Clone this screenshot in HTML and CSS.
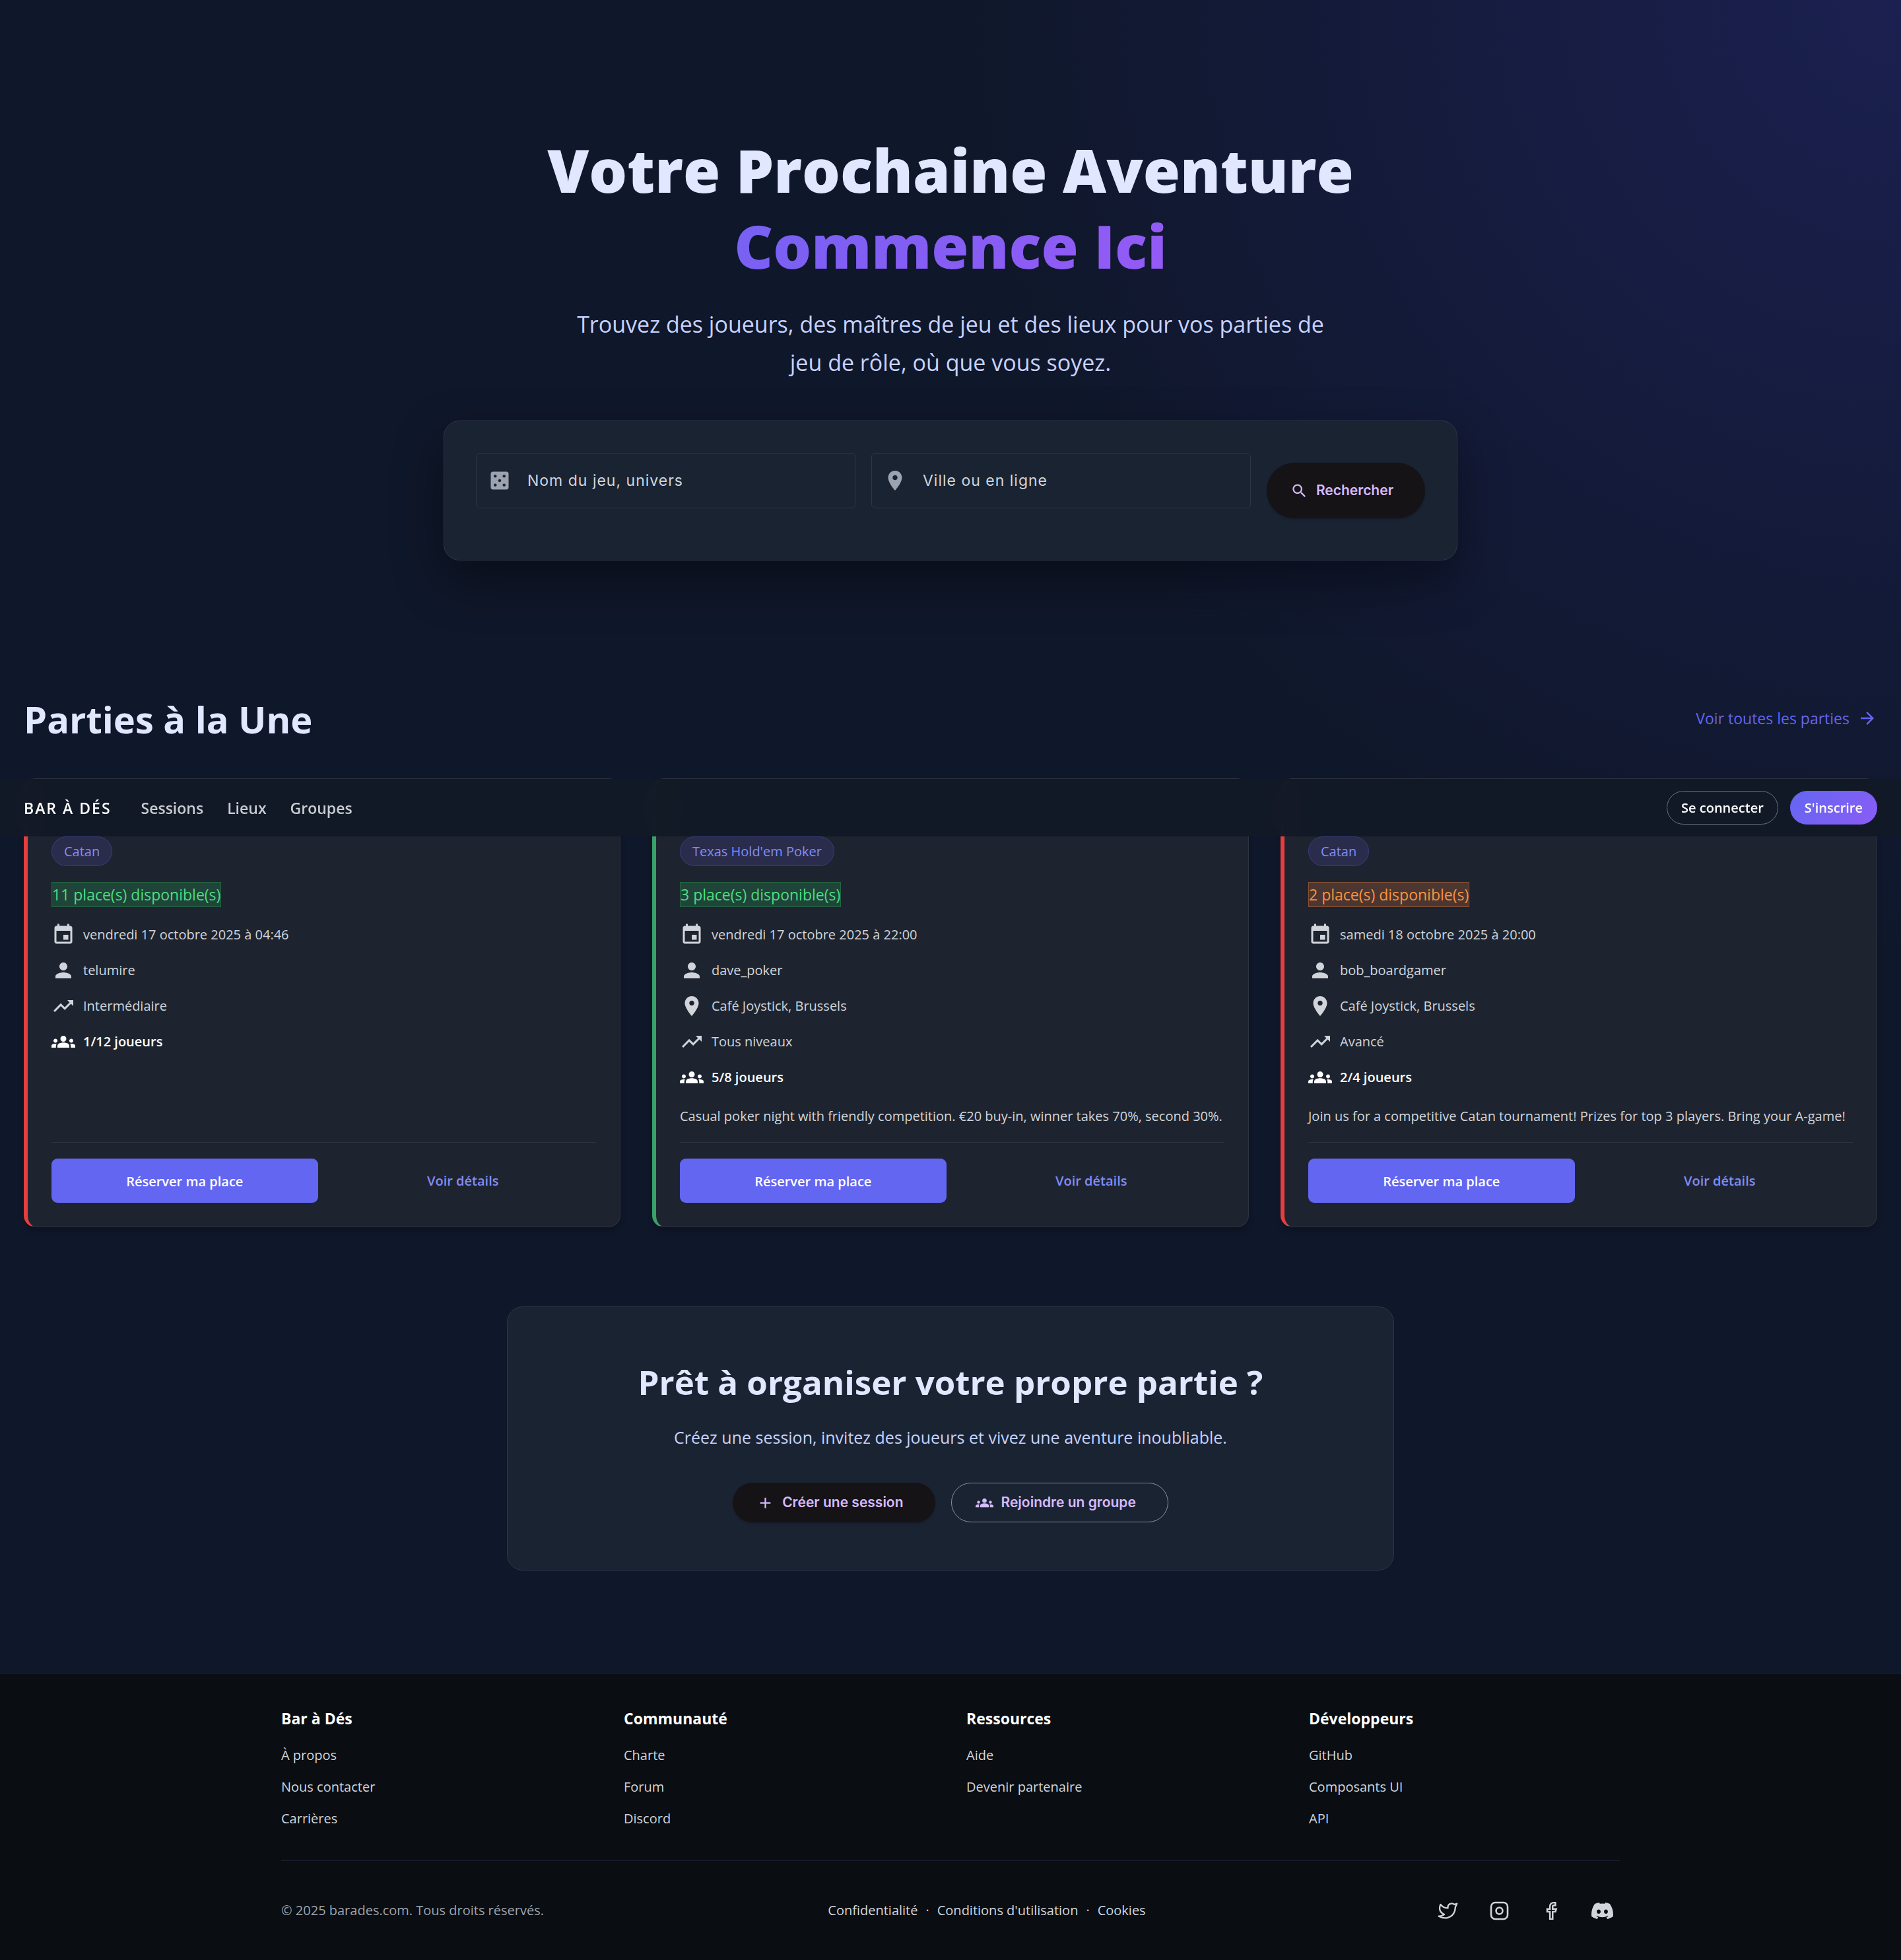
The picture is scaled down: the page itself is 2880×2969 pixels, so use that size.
FILE: index.html
```html
<!DOCTYPE html>
<html lang="fr">
<head>
<meta charset="utf-8">
<meta name="viewport" content="width=device-width, initial-scale=1">
<title>Bar à Dés</title>
<link rel="stylesheet" href="styles.css">
</head>
<body>
<svg class="sprite" aria-hidden="true">
  <symbol id="i-dice" viewBox="0 0 24 24"><path d="M19 3H5c-1.1 0-2 .9-2 2v14c0 1.1.9 2 2 2h14c1.1 0 2-.9 2-2V5c0-1.1-.9-2-2-2zM7.500 18c-.83 0-1.500-.67-1.500-1.500S6.670 15 7.500 15s1.500.67 1.500 1.500S8.330 18 7.500 18zm0-9C6.670 9 6 8.330 6 7.500S6.670 6 7.500 6 9 6.670 9 7.500 8.330 9 7.500 9zm4.500 4.500c-.83 0-1.500-.67-1.500-1.500s.67-1.500 1.500-1.500 1.500.67 1.500 1.500-.67 1.500-1.500 1.500zm4.500 4.500c-.83 0-1.500-.67-1.500-1.500s.67-1.500 1.500-1.500 1.500.67 1.500 1.500-.67 1.500-1.500 1.500zm0-9c-.83 0-1.500-.67-1.500-1.500S15.670 6 16.500 6s1.500.67 1.500 1.500S17.330 9 16.500 9z"/></symbol>
  <symbol id="i-pin" viewBox="0 0 24 24"><path d="M12 2C8.130 2 5 5.130 5 9c0 5.250 7 13 7 13s7-7.750 7-13c0-3.870-3.130-7-7-7zm0 9.500c-1.380 0-2.500-1.120-2.500-2.500s1.120-2.500 2.500-2.500 2.500 1.120 2.500 2.500-1.120 2.500-2.500 2.500z"/></symbol>
  <symbol id="i-search" viewBox="0 0 24 24"><path d="M15.500 14h-.79l-.28-.27C15.410 12.590 16 11.110 16 9.500 16 5.910 13.090 3 9.500 3S3 5.910 3 9.500 5.910 16 9.500 16c1.610 0 3.090-.59 4.230-1.570l.27.28v.79l5 4.990L20.490 19l-4.990-5zm-6 0C7.010 14 5 11.990 5 9.500S7.010 5 9.500 5 14 7.010 14 9.500 11.990 14 9.500 14z"/></symbol>
  <symbol id="i-arrow" viewBox="0 0 24 24"><path d="M12 4l-1.410 1.410L16.170 11H4v2h12.170l-5.580 5.590L12 20l8-8z"/></symbol>
  <symbol id="i-event" viewBox="0 0 24 24"><path d="M17 12h-5v5h5v-5zM16 1v2H8V1H6v2H5c-1.110 0-1.990.9-1.990 2L3 19c0 1.100.89 2 2 2h14c1.100 0 2-.9 2-2V5c0-1.100-.9-2-2-2h-1V1h-2zm3 18H5V8h14v11z"/></symbol>
  <symbol id="i-person" viewBox="0 0 24 24"><path d="M12 12c2.210 0 4-1.790 4-4s-1.790-4-4-4-4 1.790-4 4 1.790 4 4 4zm0 2c-2.670 0-8 1.340-8 4v2h16v-2c0-2.660-5.330-4-8-4z"/></symbol>
  <symbol id="i-trend" viewBox="0 0 24 24"><path d="M16 6l2.290 2.290-4.880 4.880-4-4L2 16.590 3.410 18l6-6 4 4 6.300-6.290L22 12V6z"/></symbol>
  <symbol id="i-groups" viewBox="0 0 24 24"><path d="M12 12.750c1.630 0 3.070.39 4.240.9 1.080.48 1.760 1.560 1.760 2.730V18H6v-1.610c0-1.180.68-2.260 1.760-2.730 1.170-.52 2.610-.91 4.240-.91zM4 13c1.100 0 2-.9 2-2s-.9-2-2-2-2 .9-2 2 .9 2 2 2zm1.130 1.100c-.37-.06-.74-.1-1.130-.1-.99 0-1.930.21-2.780.58C.48 14.900 0 15.620 0 16.430V18h4.500v-1.610c0-.83.23-1.610.63-2.290zM20 13c1.100 0 2-.9 2-2s-.9-2-2-2-2 .9-2 2 .9 2 2 2zm4 3.430c0-.81-.48-1.530-1.220-1.850-.85-.37-1.790-.58-2.780-.58-.39 0-.76.04-1.130.1.400.68.63 1.460.63 2.290V18H24v-1.570zM12 6c1.660 0 3 1.340 3 3s-1.340 3-3 3-3-1.340-3-3 1.340-3 3-3z"/></symbol>
  <symbol id="i-add" viewBox="0 0 24 24"><path d="M19 13h-6v6h-2v-6H5v-2h6V5h2v6h6v2z"/></symbol>
  <symbol id="i-twitter" viewBox="0 0 24 24"><path fill="none" stroke="currentColor" stroke-width="1.7" stroke-linejoin="round" stroke-linecap="round" d="M22 4.010c-1 .49-1.980.69-3 .99-1.120-1.260-2.780-1.330-4.380-.74S11.970 6.320 12 8v1c-3.240.08-6.130-1.400-8-4 0 0-4.180 7.430 4 11-1.870 1.250-3.740 2.090-6 2 3.310 1.800 6.910 2.420 10.030 1.520 3.580-1.040 6.520-3.720 7.650-7.690a13.800 13.800 0 0 0 .5-3.750C20.180 7.770 21.690 5.250 22 4.010z"/></symbol>
  <symbol id="i-instagram" viewBox="0 0 24 24"><g fill="none" stroke="currentColor" stroke-width="1.9"><rect x="2.900" y="2.900" width="18.200" height="18.200" rx="4.500"/><circle cx="12" cy="12" r="3.600"/></g></symbol>
  <symbol id="i-facebook" viewBox="0 0 24 24"><path fill="none" stroke="currentColor" stroke-width="1.800" stroke-linejoin="miter" d="M17 3h-2a4 4 0 0 0-4 4v3H8v3h3v8h3v-8h3l1-3h-4V7a1 1 0 0 1 1-1h2z"/></symbol>
  <symbol id="i-discord" viewBox="0 0 24 24"><path d="M20.320 4.370A19.800 19.800 0 0 0 15.430 2.850a.07.07 0 0 0-.08.04c-.21.37-.44.86-.61 1.250a18.300 18.300 0 0 0-5.490 0A12.600 12.600 0 0 0 8.640 2.890a.08.08 0 0 0-.08-.04 19.700 19.700 0 0 0-4.890 1.520.07.07 0 0 0-.03.03C.53 9.050-.32 13.580.1 18.060a.08.08 0 0 0 .03.06 19.900 19.900 0 0 0 5.990 3.030.08.08 0 0 0 .08-.03c.46-.63.87-1.300 1.230-1.990a.08.08 0 0 0-.04-.11 13.100 13.100 0 0 1-1.870-.89.08.08 0 0 1-.01-.13l.37-.29a.07.07 0 0 1 .08-.01c3.930 1.790 8.180 1.790 12.060 0a.07.07 0 0 1 .08.01l.37.29a.08.08 0 0 1-.01.13 12.300 12.300 0 0 1-1.870.89.08.08 0 0 0-.04.11c.36.7.77 1.360 1.220 1.990a.08.08 0 0 0 .08.03 19.800 19.800 0 0 0 6-3.030.08.08 0 0 0 .03-.05c.5-5.180-.84-9.680-3.550-13.660a.06.06 0 0 0-.03-.03zM8.020 15.330c-1.180 0-2.160-1.080-2.160-2.420s.96-2.420 2.160-2.420c1.210 0 2.180 1.100 2.160 2.420 0 1.340-.96 2.420-2.160 2.420zm7.970 0c-1.180 0-2.160-1.080-2.160-2.420s.96-2.420 2.160-2.420c1.210 0 2.180 1.100 2.160 2.420 0 1.340-.95 2.420-2.160 2.420z"/></symbol>
</svg>

<main class="page">
  <section class="hero">
    <h1 class="hero-title">Votre Prochaine Aventure <span class="hero-accent">Commence Ici</span></h1>
    <p class="hero-text">Trouvez des joueurs, des maîtres de jeu et des lieux pour vos parties de jeu de rôle, où que vous soyez.</p>
    <form class="search">
      <label class="field"><svg class="icon"><use href="#i-dice"/></svg><input type="text" placeholder="Nom du jeu, univers" aria-label="Nom du jeu, univers"></label>
      <label class="field"><svg class="icon"><use href="#i-pin"/></svg><input type="text" placeholder="Ville ou en ligne" aria-label="Ville ou en ligne"></label>
      <button class="btn btn-tall" type="submit"><svg class="icon"><use href="#i-search"/></svg>Rechercher</button>
    </form>
  </section>

  <section class="featured">
    <header class="featured-head">
      <h2 class="section-title">Parties à la Une</h2>
      <a class="more" href="#">Voir toutes les parties<svg class="icon"><use href="#i-arrow"/></svg></a>
    </header>

    <div class="featured-body">
      <nav class="nav">
        <a class="brand" href="#">BAR À DÉS</a>
        <a class="nav-link" href="#">Sessions</a>
        <a class="nav-link" href="#">Lieux</a>
        <a class="nav-link" href="#">Groupes</a>
        <div class="nav-actions">
          <a class="nav-btn" href="#">Se connecter</a>
          <a class="nav-btn nav-btn-primary" href="#">S'inscrire</a>
        </div>
      </nav>

      <div class="cards">
        <article class="card card-red">
          <span class="tag">Catan</span>
          <span class="seats">11 place(s) disponible(s)</span>
          <ul class="facts">
            <li><svg class="icon"><use href="#i-event"/></svg>vendredi 17 octobre 2025 à 04:46</li>
            <li><svg class="icon"><use href="#i-person"/></svg>telumire</li>
            <li><svg class="icon"><use href="#i-trend"/></svg>Intermédiaire</li>
            <li class="players"><svg class="icon"><use href="#i-groups"/></svg>1/12 joueurs</li>
          </ul>
          <div class="card-actions">
            <button class="reserve" type="button">Réserver ma place</button>
            <a class="details" href="#">Voir détails</a>
          </div>
        </article>

        <article class="card card-green">
          <span class="tag">Texas Hold'em Poker</span>
          <span class="seats">3 place(s) disponible(s)</span>
          <ul class="facts">
            <li><svg class="icon"><use href="#i-event"/></svg>vendredi 17 octobre 2025 à 22:00</li>
            <li><svg class="icon"><use href="#i-person"/></svg>dave_poker</li>
            <li><svg class="icon"><use href="#i-pin"/></svg>Café Joystick, Brussels</li>
            <li><svg class="icon"><use href="#i-trend"/></svg>Tous niveaux</li>
            <li class="players"><svg class="icon"><use href="#i-groups"/></svg>5/8 joueurs</li>
          </ul>
          <p class="description">Casual poker night with friendly competition. €20 buy-in, winner takes 70%, second 30%.</p>
          <div class="card-actions">
            <button class="reserve" type="button">Réserver ma place</button>
            <a class="details" href="#">Voir détails</a>
          </div>
        </article>

        <article class="card card-red">
          <span class="tag">Catan</span>
          <span class="seats seats-few">2 place(s) disponible(s)</span>
          <ul class="facts">
            <li><svg class="icon"><use href="#i-event"/></svg>samedi 18 octobre 2025 à 20:00</li>
            <li><svg class="icon"><use href="#i-person"/></svg>bob_boardgamer</li>
            <li><svg class="icon"><use href="#i-pin"/></svg>Café Joystick, Brussels</li>
            <li><svg class="icon"><use href="#i-trend"/></svg>Avancé</li>
            <li class="players"><svg class="icon"><use href="#i-groups"/></svg>2/4 joueurs</li>
          </ul>
          <p class="description">Join us for a competitive Catan tournament! Prizes for top 3 players. Bring your A-game!</p>
          <div class="card-actions">
            <button class="reserve" type="button">Réserver ma place</button>
            <a class="details" href="#">Voir détails</a>
          </div>
        </article>
      </div>
    </div>
  </section>

  <section class="cta">
    <h2 class="cta-title">Prêt à organiser votre propre partie ?</h2>
    <p class="cta-text">Créez une session, invitez des joueurs et vivez une aventure inoubliable.</p>
    <div class="cta-actions">
      <button class="btn" type="button"><svg class="icon"><use href="#i-add"/></svg>Créer une session</button>
      <button class="btn btn-outline" type="button"><svg class="icon"><use href="#i-groups"/></svg>Rejoindre un groupe</button>
    </div>
  </section>
</main>

<footer class="footer">
  <div class="footer-inner">
    <div class="footer-cols">
      <div class="footer-col"><h3>Bar à Dés</h3><a href="#">À propos</a><a href="#">Nous contacter</a><a href="#">Carrières</a></div>
      <div class="footer-col"><h3>Communauté</h3><a href="#">Charte</a><a href="#">Forum</a><a href="#">Discord</a></div>
      <div class="footer-col"><h3>Ressources</h3><a href="#">Aide</a><a href="#">Devenir partenaire</a></div>
      <div class="footer-col"><h3>Développeurs</h3><a href="#">GitHub</a><a href="#">Composants UI</a><a href="#">API</a></div>
    </div>
    <div class="footer-bottom">
      <span class="copyright">© 2025 barades.com. Tous droits réservés.</span>
      <div class="legal"><a href="#">Confidentialité</a><span>·</span><a href="#">Conditions d'utilisation</a><span>·</span><a href="#">Cookies</a></div>
      <div class="social">
        <a href="#" aria-label="Twitter"><svg class="icon"><use href="#i-twitter"/></svg></a>
        <a href="#" aria-label="Instagram"><svg class="icon"><use href="#i-instagram"/></svg></a>
        <a href="#" aria-label="Facebook"><svg class="icon"><use href="#i-facebook"/></svg></a>
        <a href="#" aria-label="Discord"><svg class="icon"><use href="#i-discord"/></svg></a>
      </div>
    </div>
  </div>
</footer>
</body>
</html>
```
FILE: styles.css
```css
* { box-sizing: border-box; }

body {
  margin: 0;
  background: #0f172a;
  color: #d1d5db;
  font-family: "Open Sans", "Noto Sans", sans-serif;
  font-size: 20px;
  line-height: 34px;
}

h1, h2, h3, p, ul { margin: 0; padding: 0; }
ul { list-style: none; }
a { color: inherit; text-decoration: none; }
button, input { font: inherit; }

.sprite { display: none; }

.icon {
  display: block;
  flex: none;
  width: 36px;
  height: 36px;
  fill: currentColor;
}

.page {
  padding-bottom: 156px;
  background: radial-gradient(circle 1440px at 100% 0, #1b2050, rgba(27, 32, 80, 0));
}

/* Hero */
.hero {
  display: flex;
  flex-direction: column;
  align-items: center;
  max-width: 1536px;
  margin: 0 auto;
  padding: 200px 0 192px;
  text-align: center;
}

.hero-title {
  width: 100%;
  color: #e0e7ff;
  font-size: 91px;
  font-weight: 800;
  line-height: 115px;
}

.hero-accent {
  display: block;
  background: linear-gradient(135deg, #6366f1, #a855f7);
  background-clip: text;
  -webkit-background-clip: text;
  color: transparent;
}

.hero-text {
  max-width: 1152px;
  margin-top: 32px;
  color: #c7d2fe;
  font-size: 34px;
  line-height: 58px;
}

.search {
  display: flex;
  align-items: center;
  gap: 24px;
  width: 100%;
  margin-top: 59px;
  padding: 48px;
  border: 1px solid #2d3748;
  border-radius: 24px;
  background: #1a2332;
  box-shadow: 0 30px 75px rgba(0, 0, 0, 0.4);
  font-family: Inter, sans-serif;
}

.field {
  display: flex;
  flex: 1;
  align-items: center;
  gap: 24px;
  height: 84px;
  margin-bottom: 30px;
  padding: 0 17px;
  border: 1px solid #2d3646;
  border-radius: 6px;
  color: #9ca3af;
}

.field input {
  flex: 1;
  min-width: 0;
  padding: 0;
  border: 0;
  outline: 0;
  background: none;
  color: #d1d5db;
  font-size: 23px;
  letter-spacing: 1px;
}

.field input::placeholder { color: #d1d5db; opacity: 1; }

.btn {
  display: flex;
  align-items: center;
  gap: 12px;
  height: 60px;
  padding: 0 48px 0 36px;
  border: 0;
  border-radius: 42px;
  background: #151316;
  box-shadow: 0 2px 3px rgba(0, 0, 0, 0.2);
  color: #d5baff;
  font-family: Inter, sans-serif;
  font-size: 21px;
  font-weight: 600;
}

.btn .icon { width: 27px; height: 27px; }
.btn-tall { height: 84px; }

.btn-outline {
  border: 1px solid #948f99;
  background: none;
  box-shadow: none;
}

/* Featured sessions */
.featured-head {
  display: flex;
  align-items: center;
  justify-content: space-between;
  padding: 0 36px 42px;
}

.section-title {
  color: #e0e7ff;
  font-size: 56px;
  line-height: 96px;
}

.more {
  display: flex;
  align-items: center;
  gap: 12px;
  padding-bottom: 3px;
  color: #6366f1;
  font-size: 23px;
  font-weight: 500;
}

.more .icon { width: 30px; height: 30px; }

.featured-body { position: relative; }

.nav {
  position: absolute;
  inset: 1px 0 auto;
  display: flex;
  align-items: center;
  gap: 36px;
  height: 87px;
  padding: 0 36px;
  background: rgba(18, 25, 38, 0.95);
  backdrop-filter: blur(18px);
  color: #c9ccd2;
  font-size: 23px;
  font-weight: 600;
}

.brand {
  margin-right: 9px;
  color: #fff;
  letter-spacing: 2px;
}

.nav-actions {
  display: flex;
  gap: 18px;
  margin-left: auto;
}

.nav-btn {
  height: 51px;
  padding: 0 21px;
  border: 1px solid #6b7280;
  border-radius: 26px;
  color: #fff;
  font-size: 20px;
  line-height: 49px;
}

.nav-btn-primary {
  border-color: transparent;
  background: linear-gradient(135deg, #6366f1, #8b5cf6) border-box;
}

.cards {
  display: grid;
  grid-template-columns: repeat(3, 1fr);
  gap: 48px;
  padding: 0 36px;
}

.card {
  display: flex;
  flex-direction: column;
  align-items: flex-start;
  padding: 87px 36px 36px;
  border: 1px solid #2d3440;
  border-left-width: 6px;
  border-radius: 18px;
  background: #1e242f;
  box-shadow: 0 6px 9px rgba(0, 0, 0, 0.2);
}

.card-red { border-left-color: #e53e3e; }
.card-green { border-left-color: #38a169; }

.tag {
  padding: 0 18px;
  border: 1px solid #3a3c7c;
  border-radius: 23px;
  background: #2a2c4c;
  color: #818cf8;
  font-size: 20px;
  font-weight: 500;
  line-height: 43px;
}

.seats {
  margin-top: 24px;
  border: 1px solid #21673f;
  background: #20443a;
  color: #4ade80;
  font-size: 23px;
  line-height: 36px;
}

.seats-few {
  border-color: #8a5334;
  background: #4b3631;
  color: #fb923c;
}

.facts {
  display: flex;
  flex-direction: column;
  gap: 18px;
  margin-top: 24px;
}

.facts li {
  display: flex;
  align-items: center;
  gap: 12px;
  height: 36px;
}

.facts .players {
  color: #fff;
  font-weight: 600;
}

.description { margin-top: 24px; }

.card-actions {
  display: grid;
  grid-template-columns: 1fr 1fr;
  gap: 18px;
  align-self: stretch;
  margin-top: auto;
  padding-top: 24px;
  border-top: 1px solid #2d3440;
}

.description + .card-actions { margin-top: 22px; }

.reserve, .details {
  height: 67px;
  border: 0;
  border-radius: 9px;
  font-size: 20px;
  font-weight: 600;
  line-height: 67px;
  text-align: center;
}

.reserve { background: #6366f1; color: #fff; }
.details { color: #818cf8; }

/* Call to action */
.cta {
  max-width: 1344px;
  margin: 120px auto 0;
  padding: 70px 72px 72px;
  border: 1px solid #2d3748;
  border-radius: 24px;
  background: #1a2332;
  text-align: center;
}

.cta-title {
  color: #e0e7ff;
  font-size: 51px;
  line-height: 86px;
}

.cta-text {
  margin-top: 20px;
  color: #c7d2fe;
  font-size: 25px;
  line-height: 43px;
}

.cta-actions {
  display: flex;
  justify-content: center;
  gap: 24px;
  margin-top: 47px;
}

/* Footer */
.footer {
  border-top: 1px solid #171b2e;
  background: #0a0d12;
}

.footer-inner {
  max-width: 2100px;
  margin: 0 auto;
  padding: 48px 36px;
}

.footer-cols {
  display: grid;
  grid-template-columns: repeat(4, 1fr);
  gap: 48px;
  padding-bottom: 46px;
}

.footer-col {
  display: flex;
  flex-direction: column;
  gap: 14px;
}

.footer-col h3 {
  margin-bottom: 6px;
  color: #fff;
  font-size: 23px;
  line-height: 38px;
}

.footer-bottom {
  display: flex;
  align-items: center;
  justify-content: space-between;
  padding-top: 48px;
  border-top: 1px solid #1a1f33;
}

.copyright { color: #9ca3af; }
.legal { display: flex; gap: 12px; }

.social { display: flex; gap: 24px; }

.social a {
  display: grid;
  place-items: center;
  width: 54px;
  height: 54px;
}

.social .icon { width: 33px; height: 33px; }
```
